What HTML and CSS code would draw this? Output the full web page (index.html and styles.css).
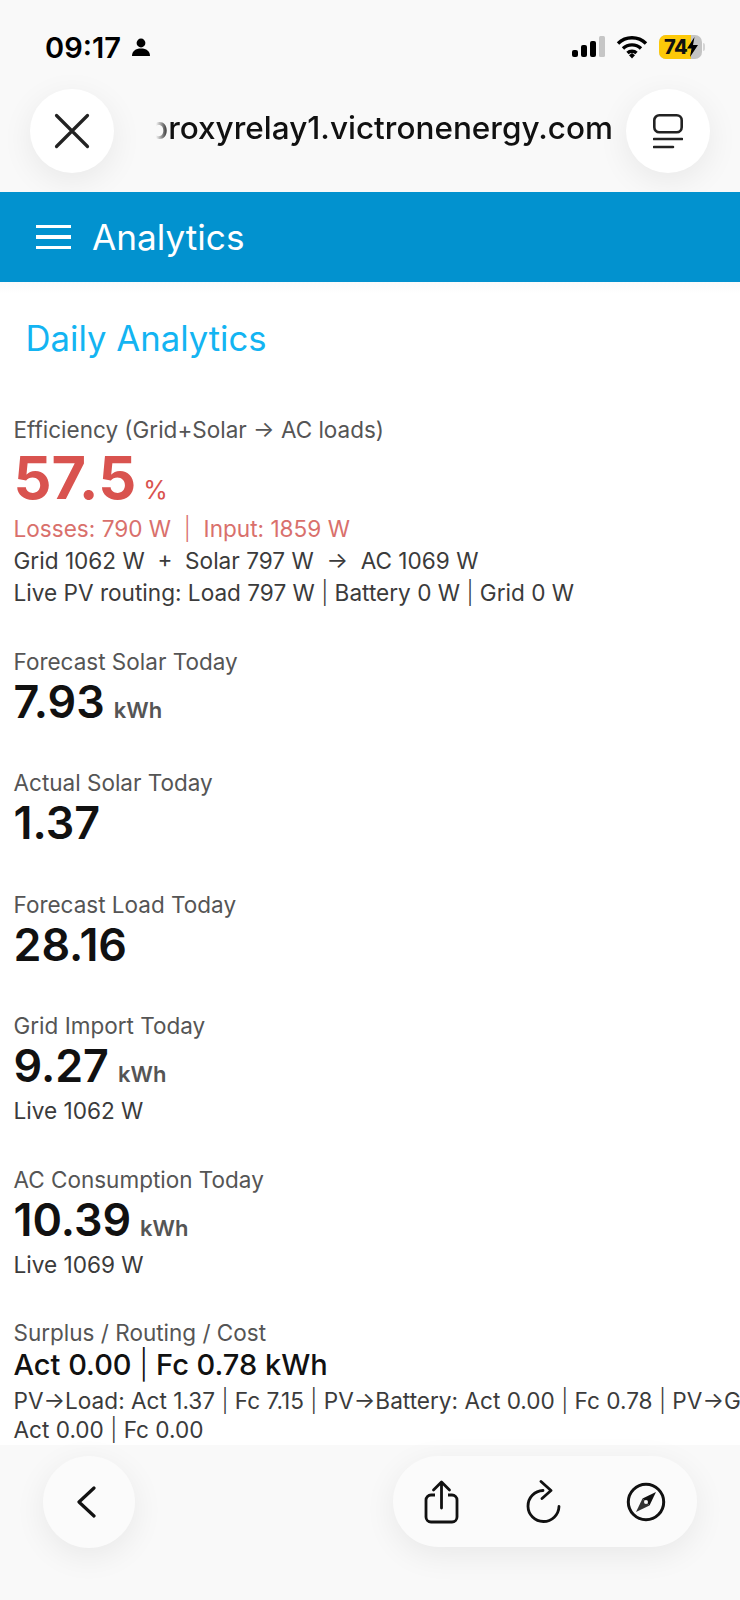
FILE: index.html
```html
<!DOCTYPE html>
<html>
<head>
	<meta charset="utf-8">
	<title>Analytics</title>
	<link rel="stylesheet" href="styles.css">
</head>
<body>
	<div class="browserTop">
		<div class="statusBar">
			<div class="statusLeft">
				<span class="clock">09:17</span>
				<svg class="personIcon" width="20" height="20" viewBox="0 0 20 20"><circle cx="10" cy="6" r="4.400" fill="#000"/><path d="M1 19c0-5 3.600-7.500 9-7.500s9 2.500 9 7.500z" fill="#000"/></svg>
			</div>
			<div class="statusRight">
				<svg width="34" height="24" viewBox="0 0 34 24"><rect x="0" y="15" width="6" height="7" rx="2" fill="#000"/><rect x="9" y="10" width="6" height="12" rx="2" fill="#000"/><rect x="18" y="6" width="6" height="16" rx="2" fill="#000"/><rect x="27" y="1" width="6" height="21" rx="1.500" fill="#c6c6c6"/></svg>
				<svg class="wifiIcon" width="32" height="24" viewBox="0 0 32 24"><path d="M2 8.500a20 20 0 0 1 28 0M7 13.500a13 13 0 0 1 18 0M11.500 18a6.500 6.500 0 0 1 9 0" fill="none" stroke="#000" stroke-width="3.400"/><path d="M13 20.200l3-2.200 3 2.200-3 3.300z" fill="#000"/></svg>
				<div class="battery">
					<div class="batteryFill"></div>
					<span class="batteryText">74</span>
					<svg class="bolt" width="11" height="20" viewBox="0 0 11 20"><path d="M7.500 0L0 11.500h4.500L3 20l8-12H6z" fill="#000"/></svg>
				</div>
				<div class="batteryNub"></div>
			</div>
		</div>
		<div class="urlBar">
			<button type="button" class="roundButton">
				<svg width="36" height="36" viewBox="0 0 36 36"><path d="M2.500 2.500l31 31M33.500 2.500l-31 31" stroke="#222" stroke-width="3.200" stroke-linecap="round"/></svg>
			</button>
			<div class="urlBox"><span class="urlText">proxyrelay1.victronenergy.com</span></div>
			<button type="button" class="roundButton">
				<svg width="30" height="35" viewBox="0 0 30 35"><rect x="1.300" y="1.300" width="27.400" height="17" rx="5" fill="none" stroke="#222" stroke-width="2.600"/><path d="M1 25h28M1 33h19" stroke="#222" stroke-width="2.600" stroke-linecap="round"/></svg>
			</button>
		</div>
	</div>

	<div class="appBar">
		<div class="burger"><span></span><span></span><span></span></div>
		<div class="appTitle">Analytics</div>
	</div>

	<div class="content">
		<h1 class="pageTitle">Daily Analytics</h1>

		<div class="metric firstMetric">
			<div class="label">Efficiency (Grid+Solar → AC loads)</div>
			<div class="bigRed">57.5<span class="redUnit">%</span></div>
			<div class="sub redSub">Losses: 790 W &nbsp;<span class="pipe">|</span>&nbsp; Input: 1859 W</div>
			<div class="sub">Grid 1062 W &nbsp;+&nbsp; Solar 797 W &nbsp;→&nbsp; AC 1069 W</div>
			<div class="sub">Live PV routing: Load 797 W <span class="pipe">|</span> Battery 0 W <span class="pipe">|</span> Grid 0 W</div>
		</div>

		<div class="metric">
			<div class="label">Forecast Solar Today</div>
			<div class="value">7.93<span class="unit">kWh</span></div>
		</div>
		<div class="metric">
			<div class="label">Actual Solar Today</div>
			<div class="value">1.37</div>
		</div>
		<div class="metric">
			<div class="label">Forecast Load Today</div>
			<div class="value">28.16</div>
		</div>
		<div class="metric">
			<div class="label">Grid Import Today</div>
			<div class="value">9.27<span class="unit">kWh</span></div>
			<div class="sub">Live 1062 W</div>
		</div>
		<div class="metric">
			<div class="label">AC Consumption Today</div>
			<div class="value">10.39<span class="unit">kWh</span></div>
			<div class="sub">Live 1069 W</div>
		</div>
		<div class="metric">
			<div class="label">Surplus / Routing / Cost</div>
			<div class="valueSmall">Act 0.00 <span class="pipe">|</span> Fc 0.78 kWh</div>
			<div class="routing">
				<div class="noWrap">PV→Load: Act 1.37 <span class="pipe">|</span> Fc 7.15 <span class="pipe">|</span> PV→Battery: Act 0.00 <span class="pipe">|</span> Fc 0.78 <span class="pipe">|</span> PV→Grid:</div>
				<div>Act 0.00 <span class="pipe">|</span> Fc 0.00</div>
			</div>
		</div>
	</div>

	<div class="browserBottom">
		<button type="button" class="backButton">
			<svg width="20" height="32" viewBox="0 0 20 32"><path d="M18 2L3 16l15 14" fill="none" stroke="#111" stroke-width="3.200" stroke-linecap="round" stroke-linejoin="round"/></svg>
		</button>
		<div class="pill">
			<svg width="36" height="44" viewBox="0 0 36 44"><path d="M11 15H7a5 5 0 0 0-5 5v17a5 5 0 0 0 5 5h21a5 5 0 0 0 5-5V20a5 5 0 0 0-5-5h-4" fill="none" stroke="#111" stroke-width="2.800"/><path d="M17.500 28V3M9.500 10l8-8 8 8" fill="none" stroke="#111" stroke-width="2.800" stroke-linecap="round" stroke-linejoin="round"/></svg>
			<svg class="reloadIcon" width="36" height="44" viewBox="0 0 36 44"><path d="M17 10.500a15.500 15.500 0 1 0 16 16" fill="none" stroke="#111" stroke-width="2.800" stroke-linecap="round"/><path d="M15 1.500l10 9-9 8" fill="none" stroke="#111" stroke-width="2.800" stroke-linecap="round" stroke-linejoin="round"/></svg>
			<svg width="40" height="40" viewBox="0 0 40 40"><circle cx="20" cy="20" r="17.700" fill="none" stroke="#111" stroke-width="3"/><path d="M30 10l-13.500 6.500 7 7z" fill="#111"/><path d="M10 30l6.500-13.500 7 7z" fill="#333"/><circle cx="20" cy="20" r="2" fill="#fbfbfb"/></svg>
		</div>
	</div>
</body>
</html>
```
FILE: styles.css
```css
*{
	box-sizing: border-box;
}
html, body{
	margin: 0;
	padding: 0;
}
body{
	width: 740px;
	height: 1600px;
	overflow: hidden;
	display: flex;
	flex-direction: column;
	background-color: #fff;
	font-family: Inter, "Liberation Sans", sans-serif;
}
button{
	border: 0;
	padding: 0;
	cursor: pointer;
}

/* browser chrome, top */
.browserTop{
	height: 192px;
	background-color: #f9f9f9;
	padding: 29px 30px 0;
}
.statusBar{
	height: 36px;
	display: flex;
	justify-content: space-between;
	align-items: center;
	padding: 0 5px 0 15px;
}
.statusLeft{
	display: flex;
	align-items: center;
	gap: 10px;
}
.clock{
	font-size: 29px;
	font-weight: 600;
	color: #000;
}
.statusRight{
	display: flex;
	align-items: center;
	gap: 10px;
}
.wifiIcon{
	margin-right: 1px;
}
.battery{
	position: relative;
	width: 43px;
	height: 24px;
	border-radius: 7px;
	background-color: #c4c4c4;
	overflow: hidden;
	display: flex;
	align-items: center;
}
.batteryNub{
	width: 2px;
	height: 8px;
	margin-left: -9px;
	border-radius: 0 2px 2px 0;
	background-color: #d5d5d5;
}
.batteryFill{
	position: absolute;
	left: 0;
	top: 0;
	bottom: 0;
	width: 32px;
	background-color: #fdc909;
}
.batteryText{
	position: relative;
	margin-left: 5px;
	font-size: 20px;
	font-weight: 800;
	color: #111;
	letter-spacing: -0.5px;
}
.bolt{
	position: relative;
}
.urlBar{
	display: flex;
	align-items: center;
	margin-top: 24px;
}
.roundButton{
	width: 84px;
	height: 84px;
	flex: none;
	border-radius: 50%;
	background-color: #fff;
	display: flex;
	align-items: center;
	justify-content: center;
	box-shadow: 0 8px 32px rgba(0, 0, 0, 0.07);
}
.urlBox{
	flex: 1;
	min-width: 0;
	display: flex;
	justify-content: flex-end;
	overflow: hidden;
	padding: 0 13px 8px 0;
}
.urlText{
	font-size: 31.5px;
	font-weight: 500;
	color: #111;
	white-space: nowrap;
	-webkit-mask-image: linear-gradient(to right, transparent 7px, #000 20px);
	mask-image: linear-gradient(to right, transparent 7px, #000 20px);
}

/* app bar */
.appBar{
	height: 90px;
	background-color: #0292cf;
	display: flex;
	align-items: center;
	padding-left: 36px;
	color: #fff;
}
.burger{
	width: 35px;
	display: flex;
	flex-direction: column;
	gap: 7px;
	margin-right: 21px;
}
.burger span{
	display: block;
	height: 3.5px;
	background-color: #fff;
}
.appTitle{
	font-size: 35.2px;
	font-weight: 400;
}

/* metrics */
.content{
	flex: 1;
	min-height: 0;
	overflow: hidden;
	padding: 10px 0 0 13.5px;
	background: linear-gradient(#fafafa, #fff 12px);
}
.pageTitle{
	margin: 24px 0 0 12px;
	font-size: 34.7px;
	line-height: 44px;
	font-weight: 400;
	color: #13b4f2;
}
.metric{
	margin-top: 36.5px;
}
.firstMetric{
	margin-top: 54px;
}
.label{
	font-size: 22.5px;
	line-height: 32px;
	color: #555;
}
.bigRed{
	padding-bottom: 5px;
	font-size: 59.5px;
	line-height: 62px;
	font-weight: 700;
	color: #d9534f;
}
.redUnit{
	margin-left: 7px;
	font-size: 25px;
	line-height: 1;
	font-weight: 400;
}
.value{
	padding-bottom: 5px;
	font-size: 44.8px;
	line-height: 48px;
	font-weight: 600;
	color: #111;
}
.unit{
	margin-left: 9px;
	font-size: 22px;
	line-height: 1;
	font-weight: 600;
	color: #555;
}
.valueSmall{
	font-size: 29px;
	line-height: 32px;
	font-weight: 500;
	color: #111;
}
.sub{
	font-size: 22.6px;
	line-height: 32px;
	color: #3b3b3b;
}
.redSub{
	color: #d9706c;
}
.routing{
	margin-top: 4.5px;
	font-size: 22.6px;
	line-height: 29px;
	color: #3b3b3b;
}
.pipe{
	font-weight: 300;
}
.noWrap{
	white-space: nowrap;
}

/* browser chrome, bottom */
.browserBottom{
	height: 155px;
	flex: none;
	background-color: #f9f9f9;
	display: flex;
	justify-content: space-between;
	align-items: flex-start;
	padding: 11px 43px 0;
}
.backButton{
	width: 92px;
	height: 92px;
	border-radius: 50%;
	background-color: #fbfbfb;
	display: flex;
	align-items: center;
	justify-content: center;
	box-shadow: 0 8px 32px rgba(0, 0, 0, 0.07);
}
.backButton svg{
	margin-right: 6px;
}
.pill{
	width: 304px;
	height: 91px;
	border-radius: 46px;
	background-color: #fbfbfb;
	display: flex;
	align-items: center;
	justify-content: space-between;
	padding: 0 31px;
	box-shadow: 0 8px 32px rgba(0, 0, 0, 0.07);
}
.reloadIcon{
	margin-left: 2px;
}
```
